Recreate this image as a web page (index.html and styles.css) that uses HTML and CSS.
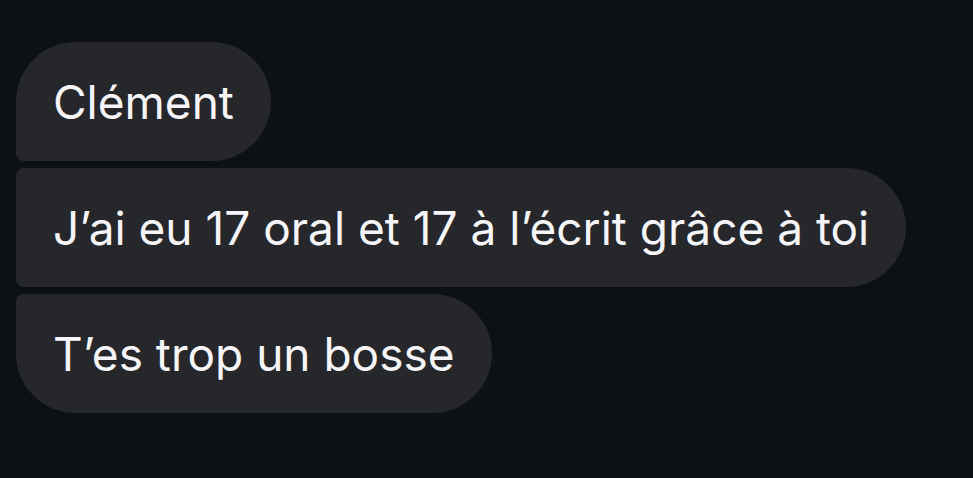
FILE: index.html
```html
<!DOCTYPE html>
<html lang="fr">
<head>
    <meta charset="UTF-8">
    <meta name="viewport" content="width=device-width, initial-scale=1.0">
    <title>Messages</title>
    <link rel="stylesheet" href="styles.css">
</head>
<body>

    <!-- groupe de messages reçus -->
    <div class="thread">
        <div class="bubble first">Clément</div>
        <div class="bubble middle">J’ai eu 17 oral et 17 à l’écrit grâce à toi</div>
        <div class="bubble last">T’es trop un bosse</div>
    </div>

</body>
</html>
```

FILE: styles.css
```css
body {
    margin: 0;
    background-color: #0d1014;
    font-family: Inter, "Liberation Sans", sans-serif;
    color: #f5f5f7;
}

.thread {
    display: flex;
    flex-direction: column;
    align-items: flex-start;
    gap: 7px;
    padding: 42px 16px 0;
}

.bubble {
    box-sizing: border-box;
    height: 119px;
    display: flex;
    align-items: center;
    padding: 0 37px;
    background-color: #25272b;
    font-size: 46px;
    white-space: nowrap;
}

/* coins selon la position dans le groupe */
.first { border-radius: 60px 60px 60px 8px; }
.middle { border-radius: 8px 60px 60px 8px; }
.last { border-radius: 8px 60px 60px 60px; }
```
